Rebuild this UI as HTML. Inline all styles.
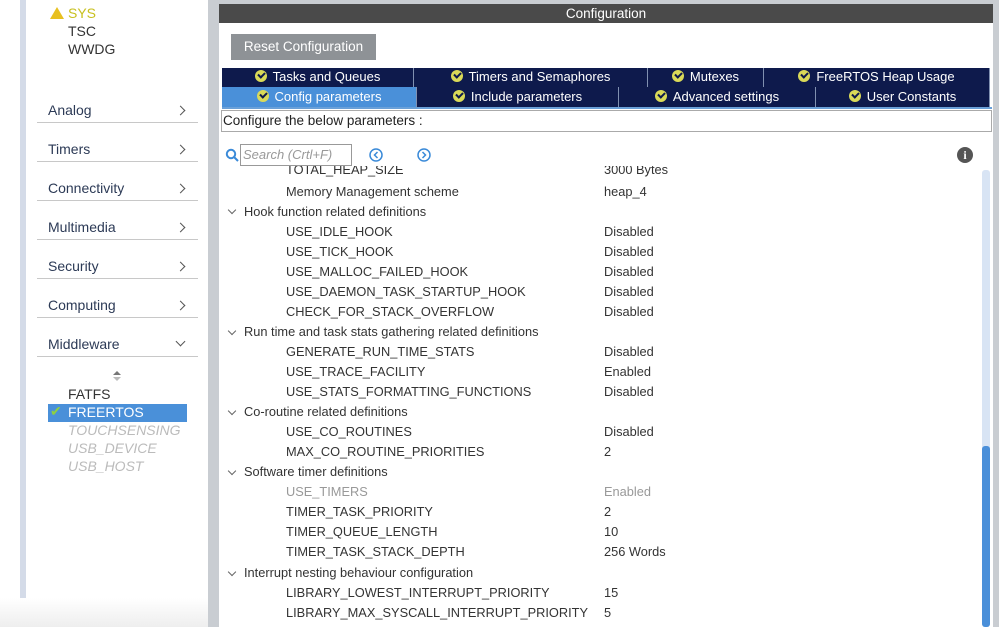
<!DOCTYPE html>
<html><head><meta charset="utf-8"><style>
*{margin:0;padding:0;box-sizing:border-box}
body{width:999px;height:627px;overflow:hidden;background:#fff;font-family:"Liberation Sans",sans-serif;position:relative;color:#333}
.a{position:absolute;white-space:nowrap}
.cat{position:absolute;left:37px;width:161px;height:39px;border-bottom:1px solid #c8c8c8;font-size:14px;color:#2c3a56}
.cat span{position:absolute;left:11px;bottom:4px}
.cat i{position:absolute;right:14px;bottom:8px;width:7px;height:7px;border-top:1px solid #555;border-right:1px solid #555;transform:rotate(45deg)}
.tab{position:absolute;background:#0e1a4c;color:#fff;font-size:13px;text-align:center;border-right:1px solid #8090b0;line-height:18px}
.ck{display:inline-block;width:12px;height:12px;border-radius:50%;background:#dada58;vertical-align:-1px;margin-right:6px;position:relative}
.ck:after{content:"";position:absolute;left:3px;top:2px;width:5px;height:3px;border-left:2px solid #0e1a4c;border-bottom:2px solid #0e1a4c;transform:rotate(-45deg)}
.r{position:absolute;font-size:12.8px;color:#333;white-space:nowrap}
.chev{position:absolute;width:6px;height:6px;border-right:1px solid #666;border-bottom:1px solid #666;transform:rotate(45deg)}
</style></head><body>
<div class="a" style="left:20px;top:0;width:6px;height:627px;background:#d4dbe8"></div>
<div class="a" style="left:208px;top:0;width:11px;height:627px;background:#c9cdd2"></div>
<div class="a" style="left:219px;top:0;width:780px;height:4px;background:#c9cdd2"></div>
<div class="a" style="left:993px;top:0;width:6px;height:627px;background:#c9cdd2"></div>
<div class="a" style="left:50px;top:7px;width:0;height:0;border-left:7px solid transparent;border-right:7px solid transparent;border-bottom:12px solid #e8c020"></div>
<div class="a" style="left:68px;top:5px;font-size:14px;color:#c8c020">SYS</div>
<div class="a" style="left:68px;top:23px;font-size:14px;color:#333">TSC</div>
<div class="a" style="left:68px;top:41px;font-size:14px;color:#333">WWDG</div>
<div class="cat" style="top:84px"><span>Analog</span><i></i></div>
<div class="cat" style="top:123px"><span>Timers</span><i></i></div>
<div class="cat" style="top:162px"><span>Connectivity</span><i></i></div>
<div class="cat" style="top:201px"><span>Multimedia</span><i></i></div>
<div class="cat" style="top:240px"><span>Security</span><i></i></div>
<div class="cat" style="top:279px"><span>Computing</span><i></i></div>
<div class="cat" style="top:318px"><span>Middleware</span><i style="transform:rotate(135deg);bottom:11px"></i></div>
<div class="a" style="left:113px;top:371px;width:0;height:0;border-left:4px solid transparent;border-right:4px solid transparent;border-bottom:4px solid #777"></div>
<div class="a" style="left:113px;top:377px;width:0;height:0;border-left:4px solid transparent;border-right:4px solid transparent;border-top:4px solid #bbb"></div>
<div class="a" style="left:68px;top:386px;font-size:14px;color:#333">FATFS</div>
<div class="a" style="left:48px;top:404px;width:139px;height:18px;background:#4a90d9"></div>
<div class="a" style="left:50px;top:403px;font-size:14px;color:#8fd040">✔</div>
<div class="a" style="left:68px;top:404px;font-size:14px;color:#fff">FREERTOS</div>
<div class="a" style="left:68px;top:422px;font-size:14px;color:#bbb;font-style:italic">TOUCHSENSING</div>
<div class="a" style="left:68px;top:440px;font-size:14px;color:#bbb;font-style:italic">USB_DEVICE</div>
<div class="a" style="left:68px;top:458px;font-size:14px;color:#bbb;font-style:italic">USB_HOST</div>
<div class="a" style="left:0;top:598px;width:208px;height:29px;background:linear-gradient(#fff,#eee)"></div>
<div class="a" style="left:219px;top:4px;width:774px;height:19px;background:#4a4a4a;color:#fff;font-size:13.5px;text-align:center;line-height:19px">Configuration</div>
<div class="a" style="left:231px;top:34px;width:145px;height:26px;background:#8e9296;color:#fff;font-size:13.5px;text-align:center;line-height:26px">Reset Configuration</div>
<div class="tab" style="left:222px;top:68px;width:192px;height:19px"><span class="ck"></span>Tasks and Queues</div>
<div class="tab" style="left:414px;top:68px;width:234px;height:19px"><span class="ck"></span>Timers and Semaphores</div>
<div class="tab" style="left:648px;top:68px;width:116px;height:19px"><span class="ck"></span>Mutexes</div>
<div class="tab" style="left:764px;top:68px;width:226px;height:19px"><span class="ck"></span>FreeRTOS Heap Usage</div>
<div class="tab" style="left:222px;top:87px;width:195px;height:20px;background:#4a90d9;line-height:20px"><span class="ck"></span>Config parameters</div>
<div class="tab" style="left:417px;top:87px;width:202px;height:20px;line-height:20px"><span class="ck"></span>Include parameters</div>
<div class="tab" style="left:619px;top:87px;width:197px;height:20px;line-height:20px"><span class="ck"></span>Advanced settings</div>
<div class="tab" style="left:816px;top:87px;width:174px;height:20px;line-height:20px"><span class="ck"></span>User Constants</div>
<div class="a" style="left:222px;top:107px;width:770px;height:2px;background:#6aa0d8"></div>
<div class="a" style="left:221px;top:110px;width:771px;height:22px;border:1px solid #aaa;font-size:13.5px;color:#222;line-height:20px;padding-left:1px">Configure the below parameters :</div>
<svg class="a" style="left:225px;top:148px" width="14" height="14"><circle cx="6" cy="6" r="4.2" fill="none" stroke="#3a8ad8" stroke-width="2"/><line x1="9" y1="9" x2="13" y2="13" stroke="#3a8ad8" stroke-width="2"/></svg>
<div class="a" style="left:240px;top:144px;width:112px;height:22px;border:1px solid #999;font-size:13px;color:#999;font-style:italic;line-height:20px;padding-left:2px">Search (Crtl+F)</div>
<svg class="a" style="left:368px;top:147px" width="16" height="16"><circle cx="8" cy="8" r="6" fill="none" stroke="#3a8ad8" stroke-width="1.5"/><path d="M9.5 5 L6.5 8 L9.5 11" fill="none" stroke="#3a8ad8" stroke-width="1.5"/></svg>
<svg class="a" style="left:416px;top:147px" width="16" height="16"><circle cx="8" cy="8" r="6" fill="none" stroke="#3a8ad8" stroke-width="1.5"/><path d="M6.5 5 L9.5 8 L6.5 11" fill="none" stroke="#3a8ad8" stroke-width="1.5"/></svg>
<div class="a" style="left:957px;top:147px;width:16px;height:16px;border-radius:50%;background:#555;color:#fff;font:bold 12px 'Liberation Serif',serif;text-align:center;line-height:16px">i</div>
<div class="a" style="left:0;top:166px;width:979px;height:461px;overflow:hidden">
<div style="position:relative;top:-165px">
<div class="r" style="left:286px;top:161px">TOTAL_HEAP_SIZE</div><div class="r" style="left:604px;top:161px">3000 Bytes</div>
<div class="r" style="left:286px;top:183px">Memory Management scheme</div><div class="r" style="left:604px;top:183px">heap_4</div>
<div class="chev" style="left:229px;top:206px"></div><div class="r" style="left:244px;top:203px">Hook function related definitions</div>
<div class="r" style="left:286px;top:223px">USE_IDLE_HOOK</div><div class="r" style="left:604px;top:223px">Disabled</div>
<div class="r" style="left:286px;top:243px">USE_TICK_HOOK</div><div class="r" style="left:604px;top:243px">Disabled</div>
<div class="r" style="left:286px;top:263px">USE_MALLOC_FAILED_HOOK</div><div class="r" style="left:604px;top:263px">Disabled</div>
<div class="r" style="left:286px;top:283px">USE_DAEMON_TASK_STARTUP_HOOK</div><div class="r" style="left:604px;top:283px">Disabled</div>
<div class="r" style="left:286px;top:303px">CHECK_FOR_STACK_OVERFLOW</div><div class="r" style="left:604px;top:303px">Disabled</div>
<div class="chev" style="left:229px;top:327px"></div><div class="r" style="left:244px;top:323px">Run time and task stats gathering related definitions</div>
<div class="r" style="left:286px;top:343px">GENERATE_RUN_TIME_STATS</div><div class="r" style="left:604px;top:343px">Disabled</div>
<div class="r" style="left:286px;top:363px">USE_TRACE_FACILITY</div><div class="r" style="left:604px;top:363px">Enabled</div>
<div class="r" style="left:286px;top:383px">USE_STATS_FORMATTING_FUNCTIONS</div><div class="r" style="left:604px;top:383px">Disabled</div>
<div class="chev" style="left:229px;top:407px"></div><div class="r" style="left:244px;top:403px">Co-routine related definitions</div>
<div class="r" style="left:286px;top:423px">USE_CO_ROUTINES</div><div class="r" style="left:604px;top:423px">Disabled</div>
<div class="r" style="left:286px;top:443px">MAX_CO_ROUTINE_PRIORITIES</div><div class="r" style="left:604px;top:443px">2</div>
<div class="chev" style="left:229px;top:467px"></div><div class="r" style="left:244px;top:463px">Software timer definitions</div>
<div class="r" style="left:286px;top:483px;color:#999">USE_TIMERS</div><div class="r" style="left:604px;top:483px;color:#999">Enabled</div>
<div class="r" style="left:286px;top:503px">TIMER_TASK_PRIORITY</div><div class="r" style="left:604px;top:503px">2</div>
<div class="r" style="left:286px;top:523px">TIMER_QUEUE_LENGTH</div><div class="r" style="left:604px;top:523px">10</div>
<div class="r" style="left:286px;top:543px">TIMER_TASK_STACK_DEPTH</div><div class="r" style="left:604px;top:543px">256 Words</div>
<div class="chev" style="left:229px;top:568px"></div><div class="r" style="left:244px;top:564px">Interrupt nesting behaviour configuration</div>
<div class="r" style="left:286px;top:584px">LIBRARY_LOWEST_INTERRUPT_PRIORITY</div><div class="r" style="left:604px;top:584px">15</div>
<div class="r" style="left:286px;top:604px">LIBRARY_MAX_SYSCALL_INTERRUPT_PRIORITY</div><div class="r" style="left:604px;top:604px">5</div>
</div></div>
<div class="a" style="left:982px;top:170px;width:8px;height:457px;background:#d8e4f4;border-radius:3px"></div>
<div class="a" style="left:982px;top:446px;width:8px;height:181px;background:#4a8fd9;border-radius:3px"></div>
</body></html>
